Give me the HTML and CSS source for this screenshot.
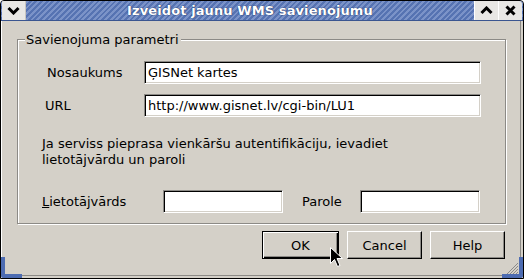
FILE: index.html
```html
<!DOCTYPE html>
<html lang="lv">
  <head>
    <meta charset="UTF-8" />
    <title>Izveidot jaunu WMS savienojumu</title>
    <link rel="stylesheet" href="styles.css">
  </head>
  <body>
    <div class="window">
      <div class="titlebar">
        <div class="tb-btn tb-menu">
          <svg width="13" height="9" viewBox="0 0 13 9"><path d="M1.5 2 L6.5 7 L11.5 2" fill="none" stroke="#000" stroke-width="3"/></svg>
        </div>
        <div class="title">Izveidot jaunu WMS savienojumu</div>
        <div class="tb-btn">
          <svg width="13" height="9" viewBox="0 0 13 9"><path d="M1.5 7 L6.5 2 L11.5 7" fill="none" stroke="#000" stroke-width="3"/></svg>
        </div>
        <div class="tb-btn tb-close">
          <svg width="11" height="11" viewBox="0 0 11 11"><path d="M1.5 1.5 L9.5 9.5 M9.5 1.5 L1.5 9.5" fill="none" stroke="#000" stroke-width="3"/></svg>
        </div>
      </div>

      <div class="client">
        <fieldset class="group">
          <legend>Savienojuma parametri</legend>

          <div class="row">
            <label class="lbl lbl-name">Nosaukums</label>
            <input class="field field-wide" type="text" value="ĢISNet kartes" />
          </div>
          <div class="row row-url">
            <label class="lbl lbl-url">URL</label>
            <input class="field field-wide" type="text" value="http://www.gisnet.lv/cgi-bin/LU1" />
          </div>

          <p class="note">Ja serviss pieprasa vienkāršu autentifikāciju, ievadiet<br>lietotājvārdu un paroli</p>

          <div class="row row-auth">
            <label class="lbl lbl-user"><u>L</u>ietotājvārds</label>
            <input class="field field-short" type="text" />
            <label class="lbl lbl-pass">Parole</label>
            <input class="field field-short" type="password" />
          </div>
        </fieldset>

        <div class="buttons">
          <button class="btn btn-default">OK</button>
          <button class="btn">Cancel</button>
          <button class="btn btn-help">Help</button>
        </div>
      </div>

      <span class="corner corner-left"></span>
      <span class="corner corner-right">
        <svg width="14" height="12" viewBox="0 0 14 12"><path d="M13 1 L2 12 M13 4 L5 12 M13 7 L8 12 M13 10 L11 12" stroke="#8a8a8a" stroke-width="1"/></svg>
      </span>

      <svg class="cursor" width="13" height="21" viewBox="0 0 13 21">
        <path d="M0.5 0.5 L0.5 16.5 L4.5 12.5 L7.5 19.5 L10 18.5 L7 11.5 L12.5 11.5 Z" fill="#000" stroke="#fff" stroke-width="1"/>
      </svg>
    </div>
  </body>
</html>
```

FILE: styles.css
```css
* {
  box-sizing: border-box;
}
body {
  margin: 0;
  background: #fff;
  font-family: "DejaVu Sans", sans-serif;
  font-size: 13px;
  color: #000;
}

.window {
  position: relative;
  width: 524px;
  height: 279px;
  border: 1px solid #000;
  border-radius: 4px 4px 0 0;
  background: #d4d0c8;
  display: flex;
  flex-direction: column;
  overflow: hidden;
  padding: 0 2px 2px 0;
}

/* title bar */
.titlebar {
  height: 20px;
  display: flex;
  background: repeating-linear-gradient(135deg, #5673b2 0 2px, #7b93c8 2px 4px);
  border-bottom: 1px solid #3a5590;
  margin-right: -2px;
}
.tb-btn {
  width: 24px;
  display: flex;
  align-items: center;
  justify-content: center;
  background: #e8e7e4;
  border-left: 1px solid #fff;
}
.tb-menu {
  margin-left: 1px;
  border-left: none;
  border-right: 1px solid #c8c6c0;
}
.tb-close {
  margin-right: 1px;
  border-radius: 0 3px 0 0;
}
.title {
  flex: 1;
  text-align: center;
  color: #fff;
  font-weight: bold;
  line-height: 19px;
  letter-spacing: 0.1px;
  text-shadow: 0 0 1px #1c3266, 0 0 1px #1c3266;
}

/* client area */
.client {
  flex: 1;
  padding: 11px 15px 0 15px;
  border-left: 1px solid #fff;
  box-shadow: inset -1px -1px 0 #8c8a86;
}

.group {
  margin: 0;
  padding: 14px 0 10px 0;
  border: 1px solid #8c8a86;
  box-shadow: 1px 1px 0 #fff, inset 1px 1px 0 #fff;
  width: 489px;
}
.group legend {
  margin-left: 7px;
  padding: 0 2px 0 1px;
  line-height: 15px;
  background: #d4d0c8;
}

.row {
  display: flex;
  align-items: center;
}
.row-url {
  margin-top: 10px;
}
.row-auth {
  margin-top: 22px;
}

.lbl-name {
  margin-left: 29px;
  width: 97px;
}
.lbl-url {
  margin-left: 27px;
  width: 99px;
}
.lbl-user {
  margin-left: 24px;
  width: 121px;
}
.lbl-pass {
  margin-left: 19px;
  width: 58px;
}

.field {
  height: 23px;
  padding: 0 3px;
  margin: 0;
  font: inherit;
  color: #000;
  background: #fff;
  border-top: 1px solid #8c8a86;
  border-left: 1px solid #8c8a86;
  border-bottom: 1px solid #fff;
  border-right: 1px solid #fff;
  box-shadow: inset 1px 1px 0 #000, inset -1px -1px 0 #d4d0c8;
  outline: none;
}
.field-wide {
  width: 337px;
}
.field-short {
  width: 120px;
}

.note {
  margin: 19px 0 0 24px;
  line-height: 16px;
}

/* dialog buttons */
.buttons {
  display: flex;
  justify-content: flex-end;
  margin-top: 7px;
  padding-right: 1px;
}
.btn {
  width: 75px;
  height: 28px;
  margin-left: 8px;
  font: inherit;
  color: #000;
  background: #d4d0c8;
  border-top: 1px solid #fff;
  border-left: 1px solid #fff;
  border-bottom: 1px solid #000;
  border-right: 1px solid #000;
  box-shadow: inset -1px -1px 0 #8c8a86;
  padding: 0;
}
.btn-default {
  width: 77px;
  border: 1px solid #000;
  box-shadow: inset 1px 1px 0 #fff, inset -1px -1px 0 #000, inset -2px -2px 0 #8c8a86;
}

/* window corners */
.corner {
  position: absolute;
  bottom: 0;
  width: 21px;
  height: 21px;
  border-bottom: 4px solid #4d6cb2;
}
.corner-left {
  left: 0;
  border-left: 4px solid #4d6cb2;
  border-radius: 0 0 0 3px;
}
.corner-right {
  right: 0;
  border-right: 4px solid #4d6cb2;
  border-radius: 0 0 3px 0;
  display: flex;
  align-items: flex-end;
  justify-content: flex-end;
}

.cursor {
  position: absolute;
  left: 329px;
  top: 246px;
}
```
